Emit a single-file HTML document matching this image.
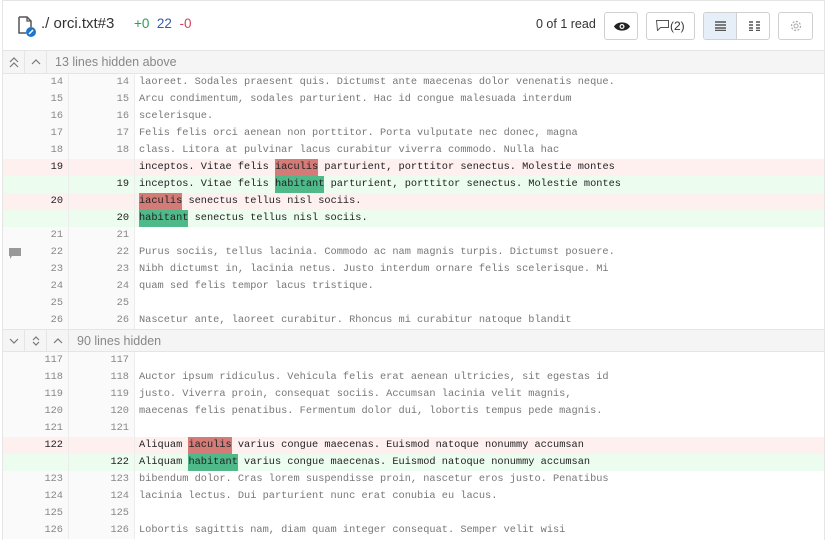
<!DOCTYPE html>
<html><head><style>
*{box-sizing:border-box;margin:0;padding:0}
body{width:825px;height:535px;overflow:hidden;background:#fff;font-family:"Liberation Sans",sans-serif;position:relative}
.panel{position:absolute;left:2px;top:0;width:823px;height:540px;border:1px solid #e5e5e5;border-bottom:none}
.hdr{height:50px;border-bottom:1px solid #e5e5e5;position:relative}
.fn{position:absolute;left:38px;top:14px;font-size:15px;color:#333}
.st{position:absolute;left:131px;top:15px;font-size:13.5px}
.btn{position:absolute;top:11px;height:28px;border:1px solid #d0d0d0;border-radius:3px;background:#fff}
.bar{height:23px;background:#f5f5f5;border-bottom:1px solid #e5e5e5;position:relative;font-size:12.5px;color:#888}
.bar .t{position:absolute;left:52px;top:4px}
.bar .b{position:absolute;top:0;height:22px;border-right:1px solid #e5e5e5}
.bar svg{position:absolute;left:5px;top:5px}
.row{height:17px;display:flex;font-family:"Liberation Mono",monospace;font-size:10.3px;line-height:17px;color:#777}
.o,.n{text-align:right;padding-right:5px;background:#fafafa;color:#888;position:relative}
.o{width:66px;border-right:1px solid #ececec}
.n{width:66px;border-right:1px solid #ececec}
.c{padding-left:4px;white-space:pre;flex:1}
.del{background:#fff0f0}.del .o,.del .n{background:#fff0f0;color:#222}
.del .c{color:#222}
.add{background:#ecfdf0}.add .o,.add .n{background:#ecfdf0;color:#222}
.add .c{color:#222}
.hd,.ha{display:inline-block;height:17px}
.hd{background:#d47b78}.ha{background:#4fb98a}
</style></head><body>
<div class="panel">
<div class="hdr">
<svg style="position:absolute;left:14px;top:15px" width="20" height="22" viewBox="0 0 20 22"><path d="M2 1h8l4 4v6M2 1v16h7" fill="none" stroke="#555" stroke-width="1.5"/><path d="M10 1v4h4" fill="none" stroke="#555" stroke-width="1.3"/><circle cx="14" cy="16" r="5" fill="#1f75cb"/><path d="M12 18l4-4" stroke="#fff" stroke-width="1.5"/></svg>
<div class="fn">./ orci.txt#3</div>
<div class="st"><span style="color:#2a9d5e">+0</span>&nbsp; <span style="color:#3a5aa8">22</span>&nbsp; <span style="color:#d4435d">-0</span></div>
<div style="position:absolute;left:533px;top:16px;font-size:12.5px;color:#333">0 of 1 read</div>
<div class="btn" style="left:601px;width:34px"><svg style="margin:8px 0 0 9px" width="16" height="11" viewBox="0 0 16 11"><path d="M0 5.5C3 0 13 0 16 5.5C13 11 3 11 0 5.5Z" fill="#222"/><circle cx="8" cy="5.5" r="2.5" fill="#fff"/><circle cx="8" cy="5.5" r="1.3" fill="#222"/></svg></div>
<div class="btn" style="left:643px;width:49px;font-size:12px;color:#333;line-height:26px;padding-left:9px"><svg width="13" height="11" viewBox="0 0 13 11" style="vertical-align:-1px;margin-right:1px"><path d="M.5.5h12v7h-8l-3 3z" fill="none" stroke="#555"/></svg>(2)</div>
<div class="btn" style="left:700px;width:67px;overflow:hidden"><div style="position:absolute;left:0;top:0;width:33px;height:26px;background:#e6eef8;border-right:1px solid #d0d0d0"></div>
<svg style="position:absolute;left:11px;top:8px" width="11" height="10"><path d="M0 1h11M0 4h11M0 7h11M0 9.5h11" stroke="#555" stroke-width="1.4"/></svg>
<svg style="position:absolute;left:45px;top:8px" width="11" height="10"><path d="M0 1h4M7 1h4M0 4h4M7 4h4M0 7h4M7 7h4M0 9.5h4M7 9.5h4" stroke="#555" stroke-width="1.4"/></svg></div>
<div class="btn" style="left:775px;width:35px"><svg style="position:absolute;left:10px;top:6px" width="14" height="14" viewBox="0 0 14 14"><circle cx="7" cy="7" r="4.5" fill="none" stroke="#aaa" stroke-width="1.2" stroke-dasharray="2 1.5"/><circle cx="7" cy="7" r="2" fill="none" stroke="#aaa"/></svg></div>
</div>
<div class="bar"><div class="b" style="left:0;width:22px"><svg width="12" height="12"><path d="M2 6l4-4 4 4M2 11l4-4 4 4" fill="none" stroke="#777" stroke-width="1.2"/></svg></div><div class="b" style="left:22px;width:22px"><svg width="12" height="12"><path d="M2 8l4-4 4 4" fill="none" stroke="#777" stroke-width="1.2"/></svg></div><div class="t">13 lines hidden above</div></div>
<div class="row"><div class="o">14</div><div class="n">14</div><div class="c">laoreet. Sodales praesent quis. Dictumst ante maecenas dolor venenatis neque.</div></div>
<div class="row"><div class="o">15</div><div class="n">15</div><div class="c">Arcu condimentum, sodales parturient. Hac id congue malesuada interdum</div></div>
<div class="row"><div class="o">16</div><div class="n">16</div><div class="c">scelerisque.</div></div>
<div class="row"><div class="o">17</div><div class="n">17</div><div class="c">Felis felis orci aenean non porttitor. Porta vulputate nec donec, magna</div></div>
<div class="row"><div class="o">18</div><div class="n">18</div><div class="c">class. Litora at pulvinar lacus curabitur viverra commodo. Nulla hac</div></div>
<div class="row del"><div class="o">19</div><div class="n"></div><div class="c">inceptos. Vitae felis <span class="hd">iaculis</span> parturient, porttitor senectus. Molestie montes</div></div>
<div class="row add"><div class="o"></div><div class="n">19</div><div class="c">inceptos. Vitae felis <span class="ha">habitant</span> parturient, porttitor senectus. Molestie montes</div></div>
<div class="row del"><div class="o">20</div><div class="n"></div><div class="c"><span class="hd">iaculis</span> senectus tellus nisl sociis.</div></div>
<div class="row add"><div class="o"></div><div class="n">20</div><div class="c"><span class="ha">habitant</span> senectus tellus nisl sociis.</div></div>
<div class="row"><div class="o">21</div><div class="n">21</div><div class="c"></div></div>
<div class="row"><div class="o">22<svg style="position:absolute;left:6px;top:4px" width="12" height="11"><path d="M0 0h12v8H3l-2 3V8H0z" fill="#999"/></svg></div><div class="n">22</div><div class="c">Purus sociis, tellus lacinia. Commodo ac nam magnis turpis. Dictumst posuere.</div></div>
<div class="row"><div class="o">23</div><div class="n">23</div><div class="c">Nibh dictumst in, lacinia netus. Justo interdum ornare felis scelerisque. Mi</div></div>
<div class="row"><div class="o">24</div><div class="n">24</div><div class="c">quam sed felis tempor lacus tristique.</div></div>
<div class="row"><div class="o">25</div><div class="n">25</div><div class="c"></div></div>
<div class="row"><div class="o">26</div><div class="n">26</div><div class="c">Nascetur ante, laoreet curabitur. Rhoncus mi curabitur natoque blandit</div></div>
<div class="bar" style="border-top:1px solid #e5e5e5;height:23px"><div class="b" style="left:0;width:22px"><svg width="12" height="12"><path d="M2 4l4 4 4-4" fill="none" stroke="#777" stroke-width="1.2"/></svg></div><div class="b" style="left:22px;width:22px"><svg width="12" height="12"><path d="M3 5l3-3 3 3M3 7l3 3 3-3" fill="none" stroke="#777" stroke-width="1.2"/></svg></div><div class="b" style="left:44px;width:22px"><svg width="12" height="12"><path d="M2 8l4-4 4 4" fill="none" stroke="#777" stroke-width="1.2"/></svg></div><div class="t" style="left:74px">90 lines hidden</div></div>
<div class="row"><div class="o">117</div><div class="n">117</div><div class="c"></div></div>
<div class="row"><div class="o">118</div><div class="n">118</div><div class="c">Auctor ipsum ridiculus. Vehicula felis erat aenean ultricies, sit egestas id</div></div>
<div class="row"><div class="o">119</div><div class="n">119</div><div class="c">justo. Viverra proin, consequat sociis. Accumsan lacinia velit magnis,</div></div>
<div class="row"><div class="o">120</div><div class="n">120</div><div class="c">maecenas felis penatibus. Fermentum dolor dui, lobortis tempus pede magnis.</div></div>
<div class="row"><div class="o">121</div><div class="n">121</div><div class="c"></div></div>
<div class="row del"><div class="o">122</div><div class="n"></div><div class="c">Aliquam <span class="hd">iaculis</span> varius congue maecenas. Euismod natoque nonummy accumsan</div></div>
<div class="row add"><div class="o"></div><div class="n">122</div><div class="c">Aliquam <span class="ha">habitant</span> varius congue maecenas. Euismod natoque nonummy accumsan</div></div>
<div class="row"><div class="o">123</div><div class="n">123</div><div class="c">bibendum dolor. Cras lorem suspendisse proin, nascetur eros justo. Penatibus</div></div>
<div class="row"><div class="o">124</div><div class="n">124</div><div class="c">lacinia lectus. Dui parturient nunc erat conubia eu lacus.</div></div>
<div class="row"><div class="o">125</div><div class="n">125</div><div class="c"></div></div>
<div class="row"><div class="o">126</div><div class="n">126</div><div class="c">Lobortis sagittis nam, diam quam integer consequat. Semper velit wisi</div></div>
</div>
</body></html>
